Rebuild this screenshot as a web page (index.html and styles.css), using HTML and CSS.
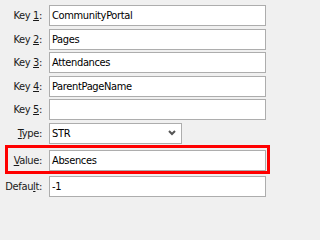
FILE: index.html
```html
<!DOCTYPE html>
<html>
<head>
<meta charset="utf-8">
<link rel="stylesheet" href="styles.css">
</head>
<body>
<div class="form">
  <div class="fields">
    <div class="row"><span class="label">Key <u>1</u>:</span><div class="input">CommunityPortal</div></div>
    <div class="row"><span class="label">Key <u>2</u>:</span><div class="input">Pages</div></div>
    <div class="row"><span class="label">Key <u>3</u>:</span><div class="input">Attendances</div></div>
    <div class="row"><span class="label">Key <u>4</u>:</span><div class="input">ParentPageName</div></div>
    <div class="row"><span class="label">Key <u>5</u>:</span><div class="input"></div></div>
    <div class="row"><span class="label"><u>T</u>ype:</span><div class="select"><span>STR</span><svg class="chev" width="8" height="6" viewBox="0 0 8 6"><path d="M1 1 L4 4 L7 1" fill="none" stroke="#555" stroke-width="2"/></svg></div></div>
  </div>
  <div class="highlight">
    <div class="row"><span class="label hl-label"><u>V</u>alue:</span><div class="input">Absences</div></div>
  </div>
  <div class="row default-row"><span class="label">Defau<u>l</u>t:</span><div class="input">-1</div></div>
</div>
</body>
</html>
```
FILE: styles.css
```css
html, body {
  margin: 0;
  padding: 0;
  background: #f0f0f0;
}
body {
  font-family: "DejaVu Sans Condensed", "DejaVu Sans", sans-serif;
  font-stretch: condensed;
  font-size: 11px;
  letter-spacing: -0.35px;
  color: #000;
}
.form {
  width: 271px;
  box-sizing: border-box;
  display: flex;
  flex-direction: column;
  padding: 5px 5px 0 5px;
}
.fields {
  display: flex;
  flex-direction: column;
  gap: 2.6px;
}
.row {
  display: flex;
  align-items: center;
  gap: 7px;
  height: 21px;
}
.label {
  width: 37px;
  flex: none;
  text-align: right;
  white-space: nowrap;
  color: #1a1a1a;
}
.input {
  flex: 1;
  height: 21px;
  box-sizing: border-box;
  border: 1px solid #adadad;
  background: #fff;
  padding: 0 2px;
  line-height: 19px;
  white-space: nowrap;
}
.select {
  width: 133px;
  flex: none;
  height: 21px;
  box-sizing: border-box;
  border: 1px solid #adadad;
  background: #fff;
  padding: 0 5px 0 2px;
  line-height: 19px;
  display: flex;
  align-items: center;
  justify-content: space-between;
}
.chev {
  display: block;
}
.highlight {
  margin-top: 1px;
  margin-right: -4px;
  border: 3px solid #ff0000;
  padding: 2px 1px 0 0;
}
.hl-label {
  width: 34px;
}
.default-row {
  margin-top: 2px;
}
```
